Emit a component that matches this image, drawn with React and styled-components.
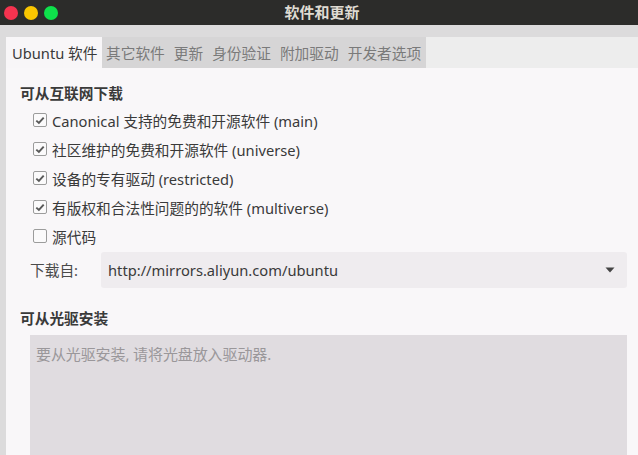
import React from 'react'
import styled, { createGlobalStyle } from 'styled-components'

const Global = createGlobalStyle`
  html, body {
    margin: 0;
    padding: 0;
    background: #dcdbdc;
    overflow: hidden;
  }
  body {
    font-family: "Noto Sans", "Noto Sans CJK SC", sans-serif;
    font-size: 14.7px;
    color: #3c3c3c;
  }
`

const Window = styled.div`
  width: 638px;
  height: 455px;
  display: flex;
  flex-direction: column;
  background: #dcdbdc;
  overflow: hidden;
`

const TitleBar = styled.div`
  height: 25px;
  flex: none;
  background: #2c2c2a;
  display: flex;
  align-items: center;
  position: relative;
`

const Lights = styled.div`
  display: flex;
  gap: 6px;
  padding-left: 4px;
`

const Light = styled.span`
  width: 14px;
  height: 14px;
  border-radius: 50%;
  background: ${(p) => p.color};
`

const Title = styled.div`
  position: absolute;
  left: 0;
  right: 0;
  text-align: center;
  font-weight: bold;
  font-size: 15px;
  color: #dfdbd2;
  padding-left: 6px;
  line-height: 25px;
`

const TabRow = styled.div`
  margin-top: 12px;
  height: 31px;
  flex: none;
  display: flex;
  padding-left: 6px;
`

const Tabs = styled.div`
  display: flex;
  background: #d6d5d6;
`

const Tab = styled.div`
  display: flex;
  align-items: center;
  padding: 0 ${(p) => (p.active ? '4px 0 6px' : '4.5px')};
  background: ${(p) => (p.active ? '#f8f6f8' : 'transparent')};
  color: ${(p) => (p.active ? '#3a3a3a' : '#7a7a7a')};
  white-space: nowrap;
`

const TabFill = styled.div`
  flex: 1;
  background: #ededed;
`

const Content = styled.div`
  flex: 1;
  margin-left: 6px;
  background: #f9f7f9;
  padding: 14px 0 0 14px;
  display: flex;
  flex-direction: column;
`

const Heading = styled.div`
  font-weight: bold;
  line-height: 22px;
  color: #3a3a3a;
`

const Options = styled.div`
  display: flex;
  flex-direction: column;
  padding: 1.5px 0 0 13px;
`

const Option = styled.label`
  display: flex;
  align-items: center;
  gap: 5px;
  height: 29px;
  color: #3a3a3a;
`

const Box = styled.span`
  width: 14px;
  height: 14px;
  box-sizing: border-box;
  border: 1px solid #9c9c9c;
  border-radius: 2px;
  background: #fbfafb;
  display: flex;
  align-items: center;
  justify-content: center;
`

const SourceRow = styled.div`
  display: flex;
  align-items: center;
  padding: 1px 11px 0 10px;
  height: 36px;
  margin-bottom: 19.5px;
`

const SourceLabel = styled.span`
  width: 71px;
  color: #4a4a4a;
`

const Select = styled.div`
  flex: 1;
  height: 36px;
  border-radius: 3px;
  background: #efecef;
  display: flex;
  align-items: center;
  justify-content: space-between;
  padding: 0 12px 0 7px;
  color: #3a3a3a;
`

const Disc = styled.div`
  flex: 1;
  margin: 6px 11px 0 10px;
  background: #e0dce0;
  padding: 8px 6px;
  color: #9a979a;
  font-size: 15px;
  letter-spacing: -0.1px;
`

const Check = ({ on }) => (
  <Box>
    {on && (
      <svg width="10" height="9" viewBox="0 0 10 9">
        <path d="M1.3 4.6 L3.9 7 L8.7 1.6" fill="none" stroke="#595959" strokeWidth="1.9" />
      </svg>
    )}
  </Box>
)

const options = [
  { text: 'Canonical 支持的免费和开源软件 (main)', on: true },
  { text: '社区维护的免费和开源软件 (universe)', on: true },
  { text: '设备的专有驱动 (restricted)', on: true },
  { text: '有版权和合法性问题的的软件 (multiverse)', on: true },
  { text: '源代码', on: false },
]

const tabs = ['Ubuntu 软件', '其它软件', '更新', '身份验证', '附加驱动', '开发者选项']

const App = () => {
  return (
    <Window>
      <Global />
      <TitleBar>
        <Lights>
          <Light color="#f5334f" />
          <Light color="#f9c600" />
          <Light color="#0ee14b" />
        </Lights>
        <Title>软件和更新</Title>
      </TitleBar>
      <TabRow>
        <Tab active>{tabs[0]}</Tab>
        <Tabs>
          {tabs.slice(1).map((t) => (
            <Tab key={t}>{t}</Tab>
          ))}
        </Tabs>
        <TabFill />
      </TabRow>
      <Content>
        <Heading>可从互联网下载</Heading>
        <Options>
          {options.map((o) => (
            <Option key={o.text}>
              <Check on={o.on} />
              {o.text}
            </Option>
          ))}
        </Options>
        <SourceRow>
          <SourceLabel>下载自:</SourceLabel>
          <Select>
            <span>http://mirrors.aliyun.com/ubuntu</span>
            <svg width="10" height="6" viewBox="0 0 10 6">
              <path d="M0.5 0.5 L9.5 0.5 L5 5.5 Z" fill="#444" />
            </svg>
          </Select>
        </SourceRow>
        <Heading>可从光驱安装</Heading>
        <Disc>要从光驱安装, 请将光盘放入驱动器.</Disc>
      </Content>
    </Window>
  )
}

export default App
